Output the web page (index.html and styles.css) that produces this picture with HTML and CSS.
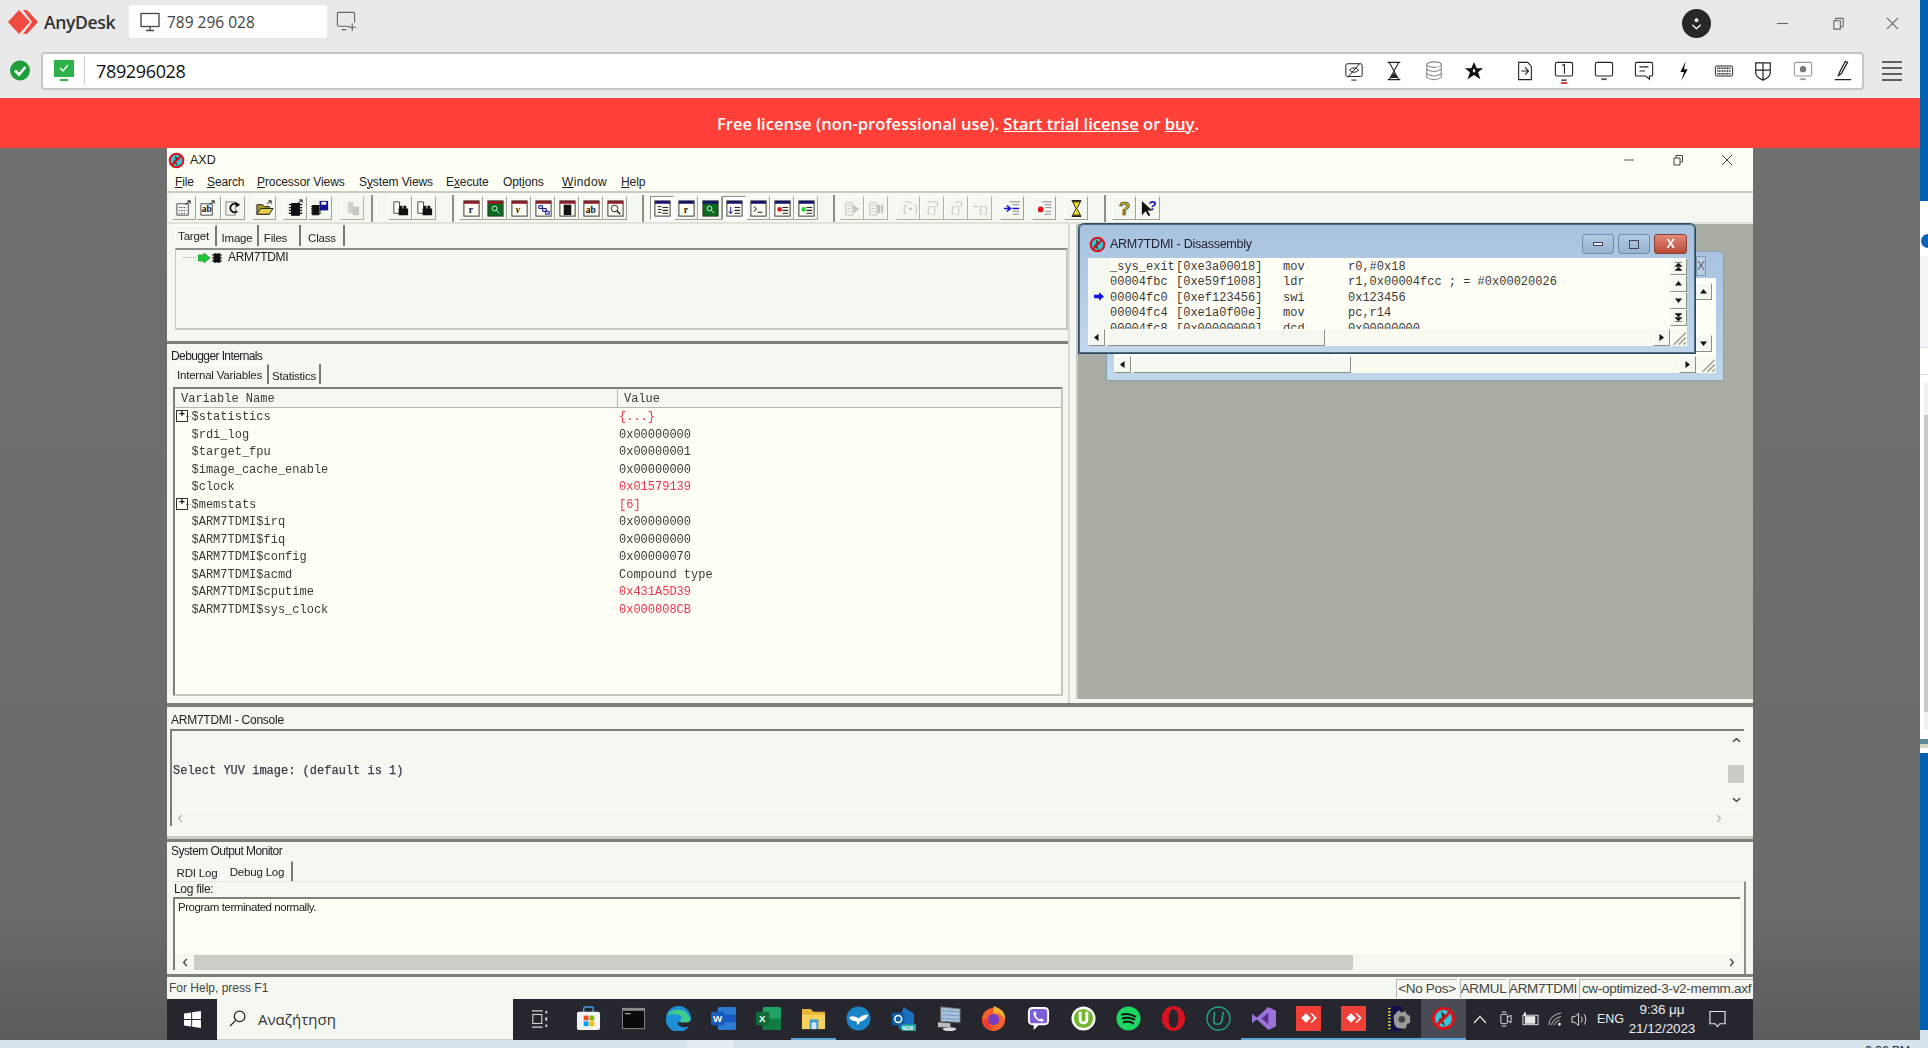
FILE: index.html
```html
<!DOCTYPE html>
<html lang="en">

<head>
    <meta charset="UTF-8">
    <title>AnyDesk - AXD</title>
    <link rel="stylesheet" href="styles.css">
</head>

<body>
    <!-- shared icons -->
    <svg class="defs" width="0" height="0">
        <defs>
            <symbol id="ad-logo" viewBox="0 0 30 30">
                <path d="M11 3 L22 15 L11 27 L0 15 Z" fill="#ef4a40" />
                <path d="M18 3 L22 3 L33 15 L22 27 L18 27 L27 15 Z" fill="#ef4a40" transform="translate(-3 0)" />
            </symbol>
            <symbol id="ad-white" viewBox="0 0 30 30">
                <path d="M10 7 L18 15 L10 23 L2 15 Z" fill="#fff" />
                <path d="M17 7 L20 7 L28 15 L20 23 L17 23 L24 15 Z" fill="#fff" />
            </symbol>
            <symbol id="up" viewBox="0 0 9 9"><path d="M4.5 2 L8 6.5 H1 Z" fill="#111" /></symbol>
            <symbol id="down" viewBox="0 0 9 9"><path d="M1 2.5 H8 L4.5 7 Z" fill="#111" /></symbol>
            <symbol id="up2" viewBox="0 0 9 9"><path d="M1 0.5 H8 M4.5 1 L8 4.5 H1 Z M4.5 5 L8 8.5 H1 Z" fill="#111" stroke="#111" stroke-width=".5" /></symbol>
            <symbol id="down2" viewBox="0 0 9 9"><path d="M1 8.5 H8 M1 0.5 H8 L4.5 4 Z M1 4.5 H8 L4.5 8 Z" fill="#111" stroke="#111" stroke-width=".5" /></symbol>
            <symbol id="left" viewBox="0 0 9 9"><path d="M2 4.5 L6.5 1 V8 Z" fill="#111" /></symbol>
            <symbol id="right" viewBox="0 0 9 9"><path d="M2.5 1 L7 4.5 L2.5 8 Z" fill="#111" /></symbol>
            <symbol id="grip" viewBox="0 0 14 14"><path d="M13 3 L3 13 M13 7 L7 13 M13 11 L11 13" stroke="#9a9c96" stroke-width="1.2" /></symbol>
            <symbol id="chip" viewBox="0 0 20 20">
                <path d="M6 5 H14 V17 H6 Z M3 6 H17 M3 9 H17 M3 12 H17 M3 15 H17" stroke="#111" stroke-width="1.4" fill="#111" />
            </symbol>
            <symbol id="frame-red" viewBox="0 0 20 20">
                <rect x="2" y="2" width="16" height="16" fill="#fffff5" stroke="#333" />
                <rect x="2" y="2" width="16" height="3" fill="#8c1c2a" />
            </symbol>
            <symbol id="frame-blue" viewBox="0 0 20 20">
                <rect x="2" y="2" width="16" height="16" fill="#fffff5" stroke="#333" />
                <rect x="2" y="2" width="16" height="3" fill="#14146e" />
            </symbol>
            <symbol id="lines" viewBox="0 0 20 20">
                <path d="M10 9 H16 M10 12 H16 M10 15 H16" stroke="#222" stroke-width="1.2" />
            </symbol>
            <symbol id="lines-off" viewBox="0 0 20 20">
                <path d="M3 4 H10 V17 H3 Z M5 7 H8 M5 10 H8 M5 13 H8" stroke="#b4b8ae" fill="none" />
            </symbol>
            <symbol id="axd" viewBox="0 0 20 20">
                <circle cx="10" cy="10" r="8" fill="#36c4d8" />
                <path d="M8 4 L13 9 L9 11 L12 17 L6 11 L9 9 Z" fill="#3a2a10" />
                <circle cx="10" cy="10" r="8" fill="none" stroke="#d8141c" stroke-width="2.4" />
                <path d="M4.5 15.5 L15.5 4.5" stroke="#d8141c" stroke-width="2.4" />
            </symbol>
            <symbol id="binoc" viewBox="0 0 20 20">
                <path d="M3 3 H9 V15 H3 Z" fill="#fffff5" stroke="#444" />
                <path d="M9 7 H12 V10 H9 Z M13 7 H16 V10 H13 Z M8 10 H13 V17 H8 Z M12 10 H18 V17 H12 Z" fill="#111" />
            </symbol>
        </defs>
    </svg>

    <div class="screen">
        <div class="desk">
            <div class="remote-frame">
                <header class="tabbar">
                    <svg class="ad-mark"><use href="#ad-logo" /></svg>
                    <span class="ad-name">AnyDesk</span>
                    <div class="session-tab">
                        <svg class="session-icon" viewBox="0 0 20 20" fill="none" stroke="#444" stroke-width="1.3">
                            <rect x="1" y="1.5" width="18" height="13" />
                            <path d="M10 15 V18 M6 18.5 H14" />
                        </svg>
                        <span>789 296 028</span>
                    </div>
                    <svg class="newtab" viewBox="0 0 22 22" fill="none" stroke="#666" stroke-width="1.2">
                        <path d="M14 16 H3 Q1.5 16 1.5 14.5 V3 Q1.5 1.5 3 1.5 H18 Q19.5 1.5 19.5 3 V12" />
                        <path d="M6 19.5 H11 M17 13 V21 M13 17 H21" />
                    </svg>
                    <div class="tabbar-right">
                        <div class="dl-badge">
                            <svg viewBox="0 0 16 16" fill="#fff">
                                <circle cx="8" cy="4.5" r="2" />
                                <path d="M3.5 8.5 L8 12.5 L12.5 8.5 L12.5 10.5 L8 14.5 L3.5 10.5 Z" />
                            </svg>
                        </div>
                        <svg class="wc wc-min" viewBox="0 0 14 14" stroke="#666" stroke-width="1.2"><path d="M1 7 H13" /></svg>
                        <svg class="wc wc-max" viewBox="0 0 14 14" fill="none" stroke="#666" stroke-width="1.2"><path d="M2 4 H9 V13 H2 Z M4 4 V1.5 H12 V10.5 H9" /></svg>
                        <svg class="wc wc-close" viewBox="0 0 14 14" stroke="#666" stroke-width="1.2"><path d="M1 1 L13 13 M13 1 L1 13" /></svg>
                    </div>
                </header>

                <div class="addressrow">
                    <svg class="ok-badge" viewBox="0 0 20 20">
                        <circle cx="10" cy="10" r="10" fill="#1f9e3a" />
                        <path d="M5 10 L9 14 L15.5 6.5" fill="none" stroke="#fff" stroke-width="2.6" />
                    </svg>
                    <div class="addressbar">
                        <svg class="addr-mon" viewBox="0 0 20 22">
                            <rect x="0" y="0" width="20" height="17" fill="#2db24a" />
                            <path d="M6 8 L9 11 L14 5" fill="none" stroke="#fff" stroke-width="1.4" />
                            <rect x="6" y="19" width="8" height="2" fill="#2db24a" />
                        </svg>
                        <span class="addr-text">789296028</span>
                        <div class="addr-tools">
                            <svg viewBox="0 0 22 22" fill="none" stroke="#222" stroke-width="1.1"><rect x="2" y="3" width="18" height="14" rx="2" /><path d="M8 21 H14 M4 18 L18 2 M6 10 Q11 5 16 10 Q11 15 6 10 Z" /></svg>
                            <svg viewBox="0 0 22 22" fill="none" stroke="#222" stroke-width="1.2"><path d="M4 1.5 H18 M4 20.5 H18 M6 2 L16 20 M16 2 L6 20" /><path d="M8 18 H14 L11 14 Z" fill="#222" /></svg>
                            <svg viewBox="0 0 22 22" fill="none" stroke="#888" stroke-width="1.2"><ellipse cx="11" cy="4" rx="8" ry="3" /><path d="M3 4 V18 Q11 23 19 18 V4 M3 9 Q11 14 19 9 M3 14 Q11 19 19 14" /></svg>
                            <svg viewBox="0 0 22 22"><path d="M11 1 L14 8 H21 L15.5 12.5 L18 20 L11 15.5 L4 20 L6.5 12.5 L1 8 H8 Z" fill="#111" /><path d="M11 8 L12.5 11 L11 13 L9.5 11 Z" fill="#fff" /></svg>
                            <span class="tool-gap"></span>
                            <svg viewBox="0 0 22 22" fill="none" stroke="#222" stroke-width="1.2"><path d="M4 1.5 H14 L18 6 V20.5 H4 Z M7 11 H14 M11 7 L15 11 L11 15" /></svg>
                            <svg class="tool-active" viewBox="0 0 22 22" fill="none" stroke="#222" stroke-width="1.2"><rect x="1.5" y="1.5" width="19" height="15" rx="2" /><path d="M9 5 L11.5 3.8 V14 M8 21 H14" /></svg>
                            <svg viewBox="0 0 22 22" fill="none" stroke="#222" stroke-width="1.2"><rect x="1.5" y="1.5" width="19" height="15" rx="2" /><path d="M8 20 H14" stroke-width="2" stroke="#555" /></svg>
                            <svg viewBox="0 0 22 22" fill="none" stroke="#222" stroke-width="1.2"><path d="M3 1.5 H19 Q20.5 1.5 20.5 3 V15 Q20.5 16.5 19 16.5 H17 V20 L13 16.5 H3 Q1.5 16.5 1.5 15 V3 Q1.5 1.5 3 1.5 Z M6 6.5 H16 M6 11 H12" /></svg>
                            <svg viewBox="0 0 22 22"><path d="M13 0 L7 12 H11 L8 22 L15 9 H11 Z" fill="#111" /></svg>
                            <svg viewBox="0 0 22 22"><rect x="1.5" y="5.5" width="19" height="11" rx="1.5" fill="#fff" stroke="#111" /><path d="M3.5 8 H18.5 M3.5 11 H18.5 M3.5 14 H18.5" stroke="#222" stroke-width="1.6" stroke-dasharray="1.2 .6" /></svg>
                            <svg viewBox="0 0 22 22" fill="none" stroke="#222" stroke-width="1.3"><path d="M3 2 H19 V13 Q19 18 11 21 Q3 18 3 13 Z M11 2 V21 M3 10 H19" /></svg>
                            <svg viewBox="0 0 22 22" fill="none" stroke="#999" stroke-width="1.2"><rect x="1.5" y="1.5" width="19" height="15" rx="2" /><circle cx="11" cy="9" r="3.5" fill="#777" stroke="none" /><path d="M8 20 H14" stroke-width="2" /></svg>
                            <svg viewBox="0 0 22 22" fill="none" stroke="#222" stroke-width="1.2"><path d="M6 16 L9 14 L16 1.5 L13.5 0.5 L7 13 Z M2 20.5 H20" stroke-width="1.4" /></svg>
                        </div>
                    </div>
                    <svg class="hamburger" viewBox="0 0 20 22" stroke="#333" stroke-width="1.5"><path d="M0 2 H20 M0 8 H20 M0 14 H20 M0 20 H20" /></svg>
                </div>

                <div class="banner">
                    Free license (non-professional use).&nbsp;<a>Start trial license</a>&nbsp;or&nbsp;<a>buy</a>.
                </div>
            </div>

            <main class="remote">
                <div class="axd">
                    <div class="axd-soft">
                        <div class="axd-title">
                            <svg class="axd-icon"><use href="#axd" /></svg>
                            <span>AXD</span>
                            <div class="axd-controls">
                                <svg viewBox="0 0 12 12" stroke="#555"><path d="M1 6 H11" /></svg>
                                <svg viewBox="0 0 12 12" fill="none" stroke="#444"><path d="M2 4 H8 V11 H2 Z M4 4 V1.5 H10.5 V8 H8" /></svg>
                                <svg viewBox="0 0 12 12" stroke="#444"><path d="M1 1 L11 11 M11 1 L1 11" /></svg>
                            </div>
                        </div>

                        <nav class="menubar">
                            <span><u>F</u>ile</span>
                            <span><u>S</u>earch</span>
                            <span><u>P</u>rocessor Views</span>
                            <span>S<u>y</u>stem Views</span>
                            <span>E<u>x</u>ecute</span>
                            <span>Opt<u>i</u>ons</span>
                            <span class="menu-window"><u>W</u>indow</span>
                            <span><u>H</u>elp</span>
                        </nav>

                        <div class="toolbar">
                            <div class="tool-group tg-first">
                                <button class="tool"><svg viewBox="0 0 20 20"><path d="M2 5 H14 V17 H2 Z" fill="#fff" stroke="#444" /><path d="M4 9 H12 M4 12 H12 M4 15 H12" stroke="#333" stroke-dasharray="1.5 1" /><path d="M11 6 L16 2 M16 2 H13 M16 2 V5" stroke="#111" fill="none" /></svg></button>
                                <button class="tool"><svg viewBox="0 0 20 20"><path d="M2 5 H14 V17 H2 Z" fill="#fff" stroke="#444" /><text x="3" y="14" class="tool-letter">ab</text><path d="M11 6 L16 2 M16 2 H13 M16 2 V5" stroke="#111" fill="none" /></svg></button>
                                <button class="tool"><svg viewBox="0 0 20 20"><path d="M2 3 H12 V17 H2 Z" fill="#f4f4ec" stroke="#888" /><path d="M14 6 A4.5 4.5 0 1 0 14 13" fill="none" stroke="#111" stroke-width="2" /><path d="M12 3 L17 6 L13 9 Z" fill="#111" /></svg></button>
                            </div>
                            <div class="tool-group tg-open">
                                <button class="tool"><svg viewBox="0 0 20 20"><path d="M2 6 H8 L10 8 H15 V16 H2 Z" fill="#a89a28" stroke="#222" /><path d="M2 16 L6 10 H19 L15 16 Z" fill="#e4d04a" stroke="#222" /><path d="M13 5 L17 2 M17 2 H14 M17 2 V5" stroke="#111" fill="none" /></svg></button>
                            </div>
                            <div class="tool-group tg-chips">
                                <button class="tool"><svg viewBox="0 0 20 20"><use href="#chip" /><path d="M13 4 L17 1 M17 1 H14 M17 1 V4" stroke="#111" fill="none" /></svg></button>
                                <button class="tool"><svg viewBox="0 0 20 20"><use href="#chip" x="-3" y="3" width="16" height="16" /><rect x="9" y="2" width="9" height="10" fill="#14148c" /><rect x="11" y="3" width="5" height="3" fill="#fff" /></svg></button>
                            </div>
                            <div class="tool-group tg-off">
                                <button class="tool tool-off"><svg viewBox="0 0 20 20"><path d="M5 3 H11 V15 H5 Z" fill="#c8ccc2" /><path d="M10 8 H17 V17 H10 Z" fill="#b8bcb2" /></svg></button>
                            </div>
                            <span class="tool-sep tool-sep-a"></span>
                            <div class="tool-group tg-find">
                                <button class="tool"><svg viewBox="0 0 20 20"><use href="#binoc" /></svg></button>
                                <button class="tool"><svg viewBox="0 0 20 20"><use href="#binoc" /></svg></button>
                            </div>
                            <span class="tool-sep tool-sep-b"></span>
                            <div class="tool-group tg-views">
                                <button class="tool"><svg viewBox="0 0 20 20"><use href="#frame-red" /><text x="7" y="15" class="tool-letter">r</text></svg></button>
                                <button class="tool"><svg viewBox="0 0 20 20"><rect x="2" y="2" width="16" height="16" fill="#0c6a1c" stroke="#333" /><rect x="2" y="2" width="16" height="3" fill="#8c1c2a" /><circle cx="9" cy="10" r="2.5" fill="none" stroke="#cfe" /><path d="M11 12 L14 15" stroke="#cfe" /></svg></button>
                                <button class="tool"><svg viewBox="0 0 20 20"><use href="#frame-red" /><text x="6" y="15" class="tool-letter tool-italic">v</text></svg></button>
                                <button class="tool"><svg viewBox="0 0 20 20"><use href="#frame-red" /><path d="M5 7 H9 V10 H5 Z M9 10 H13 V13 H9 Z M12 13 H16 V16 H12 Z" fill="#d8d8f0" stroke="#14148c" /></svg></button>
                                <button class="tool"><svg viewBox="0 0 20 20"><use href="#frame-red" /><rect x="6" y="6" width="8" height="11" fill="#111" /></svg></button>
                                <button class="tool"><svg viewBox="0 0 20 20"><use href="#frame-red" /><text x="4" y="15" class="tool-letter">ab</text></svg></button>
                                <button class="tool"><svg viewBox="0 0 20 20"><use href="#frame-red" /><circle cx="9" cy="10" r="3.5" fill="none" stroke="#222" /><path d="M11.5 12.5 L15 16" stroke="#222" stroke-width="1.5" /></svg></button>
                            </div>
                            <span class="tool-sep tool-sep-c"></span>
                            <div class="tool-group tg-cpu">
                                <button class="tool tool-on"><svg viewBox="0 0 20 20"><use href="#frame-blue" /><path d="M5 8 H9 M5 11 H9 M5 14 H9" stroke="#222" /><use href="#lines" /></svg></button>
                                <button class="tool"><svg viewBox="0 0 20 20"><use href="#frame-blue" /><text x="7" y="15" class="tool-letter">r</text></svg></button>
                                <button class="tool"><svg viewBox="0 0 20 20"><rect x="2" y="2" width="16" height="16" fill="#0c6a1c" stroke="#333" /><rect x="2" y="2" width="16" height="3" fill="#14146e" /><circle cx="9" cy="10" r="2.5" fill="none" stroke="#cfe" /><path d="M11 12 L14 15" stroke="#cfe" /></svg></button>
                                <button class="tool tool-on"><svg viewBox="0 0 20 20"><use href="#frame-blue" /><path d="M6 8 V15 M4 13 L6 15.5 L8 13" stroke="#14148c" fill="none" /><use href="#lines" /></svg></button>
                                <button class="tool"><svg viewBox="0 0 20 20"><use href="#frame-blue" /><path d="M5 8 L8 10.5 L5 13 M9 14 H14" stroke="#111" fill="none" /></svg></button>
                                <button class="tool"><svg viewBox="0 0 20 20"><use href="#frame-blue" /><circle cx="7" cy="11" r="2.5" fill="#e01420" /><use href="#lines" /></svg></button>
                                <button class="tool"><svg viewBox="0 0 20 20"><use href="#frame-blue" /><circle cx="7" cy="11" r="2.5" fill="#1cd838" /><use href="#lines" /></svg></button>
                            </div>
                            <span class="tool-sep tool-sep-d"></span>
                            <div class="tool-group tg-run">
                                <button class="tool tool-off"><svg viewBox="0 0 20 20"><use href="#lines-off" /><path d="M11 6 L17 10.5 L11 15 Z" fill="#b4b8ae" /></svg></button>
                                <button class="tool tool-off"><svg viewBox="0 0 20 20"><use href="#lines-off" /><path d="M11 6 H14 V15 H11 Z M15 6 H17 V15 H15 Z" fill="#b4b8ae" /></svg></button>
                            </div>
                            <div class="tool-group tg-step">
                                <button class="tool tool-off"><svg viewBox="0 0 20 20"><text x="3" y="14" class="tool-brace">{•}</text><path d="M6 3 H12 L14 5" fill="none" stroke="#b4b8ae" /></svg></button>
                                <button class="tool tool-off"><svg viewBox="0 0 20 20"><text x="3" y="15" class="tool-brace">{}</text><path d="M5 3 H15 V8" fill="none" stroke="#b4b8ae" /></svg></button>
                                <button class="tool tool-off"><svg viewBox="0 0 20 20"><text x="3" y="15" class="tool-brace">{}</text><path d="M9 3 H15 V8" fill="none" stroke="#b4b8ae" /></svg></button>
                                <button class="tool tool-off"><svg viewBox="0 0 20 20"><text x="7" y="15" class="tool-brace">{}</text><path d="M2 8 H8" stroke="#b4b8ae" /></svg></button>
                            </div>
                            <div class="tool-group tg-bp1">
                                <button class="tool"><svg viewBox="0 0 20 20"><path d="M7 3 H18 M10 6 H17 M10 13 H17 M10 16 H17" stroke="#888" /><path d="M1 10 H7 M4 7 L8 10 L4 13 M10 10 H17" stroke="#1414d8" stroke-width="1.6" fill="none" /></svg></button>
                            </div>
                            <div class="tool-group tg-bp2">
                                <button class="tool"><svg viewBox="0 0 20 20"><path d="M7 3 H18 M10 6 H17 M11 9 H17 M11 13 H17 M10 16 H17" stroke="#888" /><circle cx="6" cy="11" r="3" fill="#e01420" /></svg></button>
                            </div>
                            <div class="tool-group tg-wait">
                                <button class="tool"><svg viewBox="0 0 20 20"><path d="M5 2 H15 M5 18 H15" stroke="#222" stroke-width="2" /><path d="M6 3 H14 L10.5 10 L14 17 H6 L9.5 10 Z" fill="#f2e22a" stroke="#222" /></svg></button>
                            </div>
                            <span class="tool-sep tool-sep-e"></span>
                            <div class="tool-group tg-help">
                                <button class="tool"><svg viewBox="0 0 20 20"><text x="4" y="17" class="tool-help">?</text></svg></button>
                                <button class="tool"><svg viewBox="0 0 20 20"><path d="M3 2 L3 17 L7 13 L10 18 L12 17 L9 12 L14 12 Z" fill="#111" /><text x="10" y="12" class="tool-help-sm">?</text></svg></button>
                            </div>
                        </div>

                        <div class="workspace">
                            <div class="left-col">
                                <section class="target-pane">
                                    <div class="tabs tabs-target">
                                        <span class="tab tab-active tab-target">Target</span>
                                        <span class="tab tab-image">Image</span>
                                        <span class="tab tab-files">Files</span>
                                        <span class="tab tab-class">Class</span>
                                    </div>
                                    <div class="tree-box">
                                        <span class="tree-dots"></span>
                                        <svg class="tree-arrow" viewBox="0 0 12 10"><path d="M0 2 H6 V0 L12 5 L6 10 V8 H0 Z" fill="#22c83a" stroke="#128022" stroke-width=".6" /></svg>
                                        <svg class="tree-chip" viewBox="0 0 12 12"><path d="M3 2 H9 V10 H3 Z M1 3 H11 M1 6 H11 M1 9 H11 M4 1 V11 M8 1 V11" stroke="#111" fill="#111" /></svg>
                                        <span class="tree-label">ARM7TDMI</span>
                                    </div>
                                </section>

                                <section class="internals">
                                    <div class="pane-title pane-title-dbg">Debugger Internals</div>
                                    <div class="tabs tabs-dbg">
                                        <span class="tab tab-active tab-vars">Internal Variables</span>
                                        <span class="tab tab-stats">Statistics</span>
                                    </div>
                                    <div class="var-box">
                                        <div class="var-head">
                                            <span class="var-head-name">Variable Name</span>
                                            <span class="var-head-value">Value</span>
                                        </div>
                                        <div class="var-rows">
                                            <div class="var-row"><span class="var-name var-expand">$statistics</span><span class="var-changed">{...}</span></div>
                                            <div class="var-row"><span class="var-name">$rdi_log</span><span>0x00000000</span></div>
                                            <div class="var-row"><span class="var-name">$target_fpu</span><span>0x00000001</span></div>
                                            <div class="var-row"><span class="var-name">$image_cache_enable</span><span>0x00000000</span></div>
                                            <div class="var-row"><span class="var-name">$clock</span><span class="var-changed">0x01579139</span></div>
                                            <div class="var-row"><span class="var-name var-expand">$memstats</span><span class="var-changed">[6]</span></div>
                                            <div class="var-row"><span class="var-name">$ARM7TDMI$irq</span><span>0x00000000</span></div>
                                            <div class="var-row"><span class="var-name">$ARM7TDMI$fiq</span><span>0x00000000</span></div>
                                            <div class="var-row"><span class="var-name">$ARM7TDMI$config</span><span>0x00000070</span></div>
                                            <div class="var-row"><span class="var-name">$ARM7TDMI$acmd</span><span>Compound type</span></div>
                                            <div class="var-row"><span class="var-name">$ARM7TDMI$cputime</span><span class="var-changed">0x431A5D39</span></div>
                                            <div class="var-row"><span class="var-name">$ARM7TDMI$sys_clock</span><span class="var-changed">0x000008CB</span></div>
                                        </div>
                                    </div>
                                </section>
                            </div>

                            <div class="mdi">
                                <div class="win win-back">
                                    <div class="win-back-close">X</div>
                                    <div class="back-client">
                                        <div class="back-vscroll">
                                            <span class="sb-btn"><svg><use href="#up" /></svg></span>
                                            <span class="back-thumb"></span>
                                            <span class="sb-btn"><svg><use href="#down" /></svg></span>
                                        </div>
                                        <div class="hscroll">
                                            <span class="sb-btn"><svg><use href="#left" /></svg></span>
                                            <span class="sb-thumb back-hthumb"></span>
                                            <span class="sb-btn sb-push back-right"><svg><use href="#right" /></svg></span>
                                            <svg class="grip"><use href="#grip" /></svg>
                                        </div>
                                    </div>
                                </div>

                                <div class="win win-front">
                                    <div class="win-title">
                                        <svg class="win-icon"><use href="#axd" /></svg>
                                        <span>ARM7TDMI - Disassembly</span>
                                        <div class="win-controls">
                                            <span class="wbtn"><i class="wbtn-min"></i></span>
                                            <span class="wbtn"><i class="wbtn-max"></i></span>
                                            <span class="wbtn wbtn-close">X</span>
                                        </div>
                                    </div>
                                    <div class="dis-client">
                                        <div class="dis-body">
                                            <div class="dis-gutter">
                                                <svg class="pc-arrow" viewBox="0 0 12 10"><path d="M0 3 H6 V0 L12 5 L6 10 V7 H0 Z" fill="#1414e0" /></svg>
                                            </div>
                                            <div class="dis-lines">
                                                <div class="dis-line"><span>_sys_exit</span><span>[0xe3a00018]</span><span>mov</span><span>r0,#0x18</span></div>
                                                <div class="dis-line"><span>00004fbc</span><span>[0xe59f1008]</span><span>ldr</span><span>r1,0x00004fcc ; = #0x00020026</span></div>
                                                <div class="dis-line"><span>00004fc0</span><span>[0xef123456]</span><span>swi</span><span>0x123456</span></div>
                                                <div class="dis-line"><span>00004fc4</span><span>[0xe1a0f00e]</span><span>mov</span><span>pc,r14</span></div>
                                                <div class="dis-line"><span>00004fc8</span><span>[0x00000000]</span><span>dcd</span><span>0x00000000</span></div>
                                            </div>
                                            <div class="dis-vscroll">
                                                <span class="sb-btn"><svg><use href="#up2" /></svg></span>
                                                <span class="sb-btn"><svg><use href="#up" /></svg></span>
                                                <span class="sb-btn"><svg><use href="#down" /></svg></span>
                                                <span class="sb-btn"><svg><use href="#down2" /></svg></span>
                                            </div>
                                        </div>
                                        <div class="hscroll">
                                            <span class="sb-btn"><svg><use href="#left" /></svg></span>
                                            <span class="sb-thumb dis-hthumb"></span>
                                            <span class="sb-btn sb-push"><svg><use href="#right" /></svg></span>
                                            <svg class="grip"><use href="#grip" /></svg>
                                        </div>
                                    </div>
                                </div>
                            </div>
                        </div>

                        <section class="console">
                            <div class="pane-title pane-title-console">ARM7TDMI - Console</div>
                            <div class="console-box">
                                <div class="console-main">
                                    <pre class="console-text">Select YUV image: (default is 1)</pre>
                                    <div class="console-vbar">
                                        <svg class="chev" viewBox="0 0 10 6"><path d="M1 5 L5 1.5 L9 5" /></svg>
                                        <span class="console-thumb"></span>
                                        <svg class="chev" viewBox="0 0 10 6"><path d="M1 1 L5 4.5 L9 1" /></svg>
                                    </div>
                                </div>
                                <div class="console-hbar">
                                    <svg class="chev-side" viewBox="0 0 6 10"><path d="M5 1 L1.5 5 L5 9" /></svg>
                                    <svg class="chev-side" viewBox="0 0 6 10"><path d="M1 1 L4.5 5 L1 9" /></svg>
                                </div>
                            </div>
                        </section>

                        <section class="monitor">
                            <div class="pane-title pane-title-mon">System Output Monitor</div>
                            <div class="tabs tabs-mon">
                                <span class="tab tab-rdi">RDI Log</span>
                                <span class="tab tab-active tab-debug">Debug Log</span>
                            </div>
                            <div class="mon-body">
                                <div class="log-label">Log file:</div>
                                <div class="log-box">
                                    <div class="log-text">Program terminated normally.</div>
                                    <div class="log-hbar">
                                        <svg class="chev-side chev-dark" viewBox="0 0 6 10"><path d="M5 1 L1.5 5 L5 9" /></svg>
                                        <span class="log-thumb"></span>
                                        <svg class="chev-side chev-dark" viewBox="0 0 6 10"><path d="M1 1 L4.5 5 L1 9" /></svg>
                                    </div>
                                </div>
                            </div>
                        </section>

                        <footer class="statusbar">
                            <span class="status-help">For Help, press F1</span>
                            <span class="status-field status-pos">&lt;No Pos&gt;</span>
                            <span class="status-field status-armul">ARMUL</span>
                            <span class="status-field status-cpu">ARM7TDMI</span>
                            <span class="status-field status-file">cw-optimized-3-v2-memm.axf</span>
                        </footer>
                    </div>

                    <div class="taskbar">
                        <div class="start">
                            <svg viewBox="0 0 18 18" fill="#fff"><path d="M0 2.6 L7.6 1.5 V8.4 H0 Z M8.6 1.4 L18 0 V8.4 H8.6 Z M0 9.6 H7.6 V16.5 L0 15.4 Z M8.6 9.6 H18 V18 L8.6 16.6 Z" /></svg>
                        </div>
                        <div class="searchbox">
                            <svg viewBox="0 0 16 16" fill="none" stroke="#222" stroke-width="1.2"><circle cx="10" cy="6" r="5" /><path d="M6.2 9.8 L1 15" /></svg>
                            <span>Αναζήτηση</span>
                        </div>
                        <div class="taskview">
                            <svg viewBox="0 0 20 20" fill="none" stroke="#d8d8d8" stroke-width="1.2"><path d="M1 1 H13 M1 19 H13" /><rect x="2" y="5" width="10" height="10" /><path d="M17 1 V4 M17 8 V12 M17 16 V19" stroke-width="2" /></svg>
                        </div>
                        <div class="task-apps">
                            <span class="app"><svg viewBox="0 0 26 26"><path d="M8 7 V3 Q8 1 10 1 H16 Q18 1 18 3 V7" fill="none" stroke="#3aa0e0" stroke-width="1.6" /><rect x="1" y="6" width="24" height="19" rx="2" fill="#f4f4f4" /><rect x="8" y="10" width="5" height="5" fill="#f25022" /><rect x="14" y="10" width="5" height="5" fill="#7fba00" /><rect x="8" y="16" width="5" height="5" fill="#00a4ef" /><rect x="14" y="16" width="5" height="5" fill="#ffb900" /></svg></span>
                            <span class="app"><svg viewBox="0 0 26 26"><rect x="1" y="2" width="24" height="22" fill="#8a8a8a" /><rect x="2" y="5" width="22" height="18" fill="#0a0a0a" /><path d="M4 8 H10" stroke="#ccc" /></svg></span>
                            <span class="app"><svg viewBox="0 0 26 26"><path d="M13 0 A13 13 0 0 1 26 13 Q26 17 21 17 H12 Q12 22 19 22 Q22 22 24 21 A13 13 0 0 1 0 13 A13 13 0 0 1 13 0 Z" fill="#1d8fd8" /><path d="M1 10 Q4 4 12 4 Q22 4 25 13 Q26 17 21 17 H14 Q19 10 12 9 Q5 8 1 10 Z" fill="#3ecb8c" /></svg></span>
                            <span class="app"><svg viewBox="0 0 26 26"><rect x="7" y="1" width="19" height="24" rx="2" fill="#2b7cd3" /><rect x="7" y="9" width="19" height="8" fill="#185abd" /><rect x="0" y="6" width="14" height="14" rx="1" fill="#185abd" /><text x="2" y="17" class="app-letter">W</text></svg></span>
                            <span class="app"><svg viewBox="0 0 26 26"><rect x="7" y="1" width="19" height="24" rx="2" fill="#21a366" /><rect x="7" y="13" width="19" height="12" fill="#107c41" /><rect x="0" y="6" width="14" height="14" rx="1" fill="#0f6c3a" /><text x="3" y="17" class="app-letter">X</text></svg></span>
                            <span class="app app-open"><svg viewBox="0 0 26 26"><path d="M1 3 H10 L13 6 H25 V24 H1 Z" fill="#e8b53a" /><rect x="1" y="9" width="24" height="15" fill="#f7d15e" /><rect x="9" y="14" width="9" height="10" fill="#3a9ad8" /><rect x="11" y="17" width="5" height="7" fill="#cfe6f5" /></svg></span>
                            <span class="app"><svg viewBox="0 0 26 26"><circle cx="13" cy="13" r="12.5" fill="#1a86c8" /><path d="M3 12 Q8 9 13 13 Q18 8 23 9 Q21 15 15 16 L12 20 L11 16 Q6 16 3 12 Z" fill="#fff" /></svg></span>
                            <span class="app"><svg viewBox="0 0 26 26"><path d="M13 1 L24 8 V24 H8 V16 Z" fill="#1e6fc0" /><rect x="1" y="7" width="13" height="13" rx="1" fill="#0f5ba8" /><circle cx="7.5" cy="13.5" r="3.6" fill="none" stroke="#fff" stroke-width="1.6" /><rect x="11" y="19" width="15" height="7" fill="#1fa8a0" /><text x="11.5" y="25" class="app-tiny">NEW</text></svg></span>
                            <span class="app"><svg viewBox="0 0 26 26"><path d="M5 1 L25 3 V17 L5 16 Z" fill="#a8c4dc" stroke="#777" /><path d="M7 5 L23 6 M7 9 L23 10 M7 13 L23 14" stroke="#4a78b0" stroke-dasharray="1.5 1" /><path d="M2 17 L15 18 V22 H2 Z" fill="#bbb" /><ellipse cx="14" cy="24" rx="7" ry="2" fill="#ddd" /></svg></span>
                            <span class="app"><svg viewBox="0 0 26 26"><circle cx="13" cy="14" r="12" fill="#f9622a" /><path d="M13 0 Q26 4 25 14 Q20 6 13 8 Z" fill="#fbb132" /><circle cx="13" cy="14" r="6" fill="#7a3dc0" /><path d="M1 14 Q3 24 13 25 Q7 20 8 14 Z" fill="#f0392f" /></svg></span>
                            <span class="app"><svg viewBox="0 0 26 26"><path d="M7 1 H19 Q24 1 24 6 V15 Q24 20 19 20 H13 L8 25 V20 Q2 20 2 15 V6 Q2 1 7 1 Z" fill="#fff" /><path d="M7 3 H19 Q22 3 22 6 V15 Q22 18 19 18 H7 Q4 18 4 15 V6 Q4 3 7 3 Z" fill="#7d60d8" /><path d="M8 6 Q10 5 11 8 L10 10 Q12 13 14 14 L16 13 Q19 14 18 16 Q14 17 10 13 Q7 9 8 6 Z" fill="#fff" /></svg></span>
                            <span class="app"><svg viewBox="0 0 26 26"><circle cx="13" cy="13" r="12.5" fill="#fff" /><circle cx="13" cy="13" r="10" fill="#74b72e" /><path d="M8 6 V14 Q8 19 13 19 Q18 19 18 14 V6 H15 V14 Q15 16 13 16 Q11 16 11 14 V6 Z" fill="#fff" /></svg></span>
                            <span class="app"><svg viewBox="0 0 26 26"><circle cx="13" cy="13" r="12.5" fill="#1ed760" /><path d="M6 9 Q13 7 20 11 M7 13 Q13 11 19 14 M8 17 Q13 15 18 18" fill="none" stroke="#111" stroke-width="2" stroke-linecap="round" /></svg></span>
                            <span class="app"><svg viewBox="0 0 26 26"><ellipse cx="13" cy="13" rx="12" ry="13" fill="#d81420" /><ellipse cx="13" cy="13" rx="5" ry="10" fill="#26262f" /></svg></span>
                            <span class="app"><svg viewBox="0 0 26 26"><circle cx="13" cy="13" r="12" fill="none" stroke="#1fa87c" stroke-width="1.4" /><path d="M9 6 L8 15 Q8 19 12 19 Q16 19 16.5 15 L18 6" fill="none" stroke="#1fa87c" stroke-width="1.6" /></svg></span>
                            <span class="app app-open"><svg viewBox="0 0 26 26"><path d="M18 1 L26 5 V21 L18 25 L6 14 L1 18 V8 L6 12 Z" fill="#9a72d8" /><path d="M18 7 L11 13 L18 19 Z" fill="#5c2d91" /></svg></span>
                            <span class="app app-open"><span class="ad-tile"><svg><use href="#ad-white" /></svg></span></span>
                            <span class="app app-open"><span class="ad-tile"><svg><use href="#ad-white" /></svg></span></span>
                            <span class="app app-open"><svg viewBox="0 0 28 30"><rect x="1" y="0" width="17" height="30" fill="#10104a" /><path d="M3 2 V28" stroke="#e8d820" stroke-width="3" stroke-dasharray="2 2" /><path d="M8 12 L14 5 L18 8 L22 6 L24 10 L28 12 V20 L24 22 L23 27 L17 27 L12 26 L9 22 Z" fill="#9a9a9a" /><circle cx="18" cy="16" r="4" fill="#444" /></svg></span>
                            <span class="app app-open app-current"><svg><use href="#axd" /></svg></span>
                        </div>
                        <div class="tray">
                            <svg class="tray-chevron" viewBox="0 0 14 8" fill="none" stroke="#e8e8e8" stroke-width="1.2"><path d="M1 7.5 L7 1 L13 7.5" /></svg>
                            <svg class="tray-meet" viewBox="0 0 14 18" fill="none" stroke="#e8e8e8"><rect x="2" y="4" width="7" height="10" rx="1" /><path d="M9 7 L13 5 V13 L9 11 M3 1.5 H8 M3 16.5 H8" /></svg>
                            <svg class="tray-batt" viewBox="0 0 18 14"><rect x="1" y="3" width="16" height="10" fill="none" stroke="#e8e8e8" /><rect x="3" y="4" width="11" height="8" fill="#e8e8e8" /><path d="M2 0 H4 V4 H2 Z" fill="#fff" /></svg>
                            <svg class="tray-wifi" viewBox="0 0 16 16" fill="none" stroke="#d8d8d8"><path d="M1 15 Q1 4 15 1 M4 15 Q5 8 15 5 M7 15 Q8 11 13 9" /><circle cx="13" cy="14" r="1.3" fill="#e8e8e8" /></svg>
                            <svg class="tray-sound" viewBox="0 0 18 16" fill="none" stroke="#e8e8e8"><path d="M1 5 H4 L8 1.5 V14.5 L4 11 H1 Z M11 5 Q13 8 11 11 M14 2.5 Q17.5 8 14 13.5" /></svg>
                            <span class="tray-lang">ENG</span>
                            <div class="clock"><span>9:36 μμ</span><span>21/12/2023</span></div>
                            <svg class="tray-note" viewBox="0 0 18 18" fill="none" stroke="#e8e8e8" stroke-width="1.2"><path d="M1 1 H17 V14 H11.5 L9 17 L6.5 14 H1 Z" /></svg>
                        </div>
                    </div>
                </div>
            </main>

            <div class="strip">
                <span class="strip-block"></span>
                <span class="strip-time">9:36 PM</span>
            </div>
        </div>

        <aside class="edge">
            <div class="edge-blue edge-top"></div>
            <div class="edge-white"><span class="edge-dot"></span></div>
            <div class="edge-pale"></div>
            <div class="edge-input"></div>
            <div class="edge-gap"></div>
            <div class="edge-list"><span class="edge-track"><i></i></span></div>
            <div class="edge-gap2"></div>
            <div class="edge-thumb"></div>
            <div class="edge-blue edge-bottom"></div>
            <div class="edge-foot"></div>
        </aside>
    </div>
</body>

</html>
```

FILE: styles.css
```css
* {
    box-sizing: border-box;
}

html,
body {
    margin: 0;
    height: 100%;
    overflow: hidden;
}

body {
    font-family: "Liberation Sans", Arial, sans-serif;
    font-size: 12px;
    color: #222;
}

.defs {
    position: absolute;
}

.screen {
    display: flex;
    width: 1928px;
    height: 1048px;
}

.desk {
    display: flex;
    flex-direction: column;
    width: 1920px;
}

/* anydesk chrome */
.remote-frame {
    height: 148px;
    background-color: #e9e9e9;
    flex: none;
}

.tabbar {
    display: flex;
    align-items: center;
    height: 44px;
    padding: 0 0 1px 8px;
}

.ad-mark {
    width: 30px;
    height: 30px;
}

.ad-name {
    width: 85px;
    margin-left: 6px;
    font-family: "Open Sans", sans-serif;
    font-size: 17.6px;
    font-weight: 600;
    letter-spacing: -0.4px;
    color: #333;
}

.session-tab {
    display: flex;
    align-items: center;
    width: 198px;
    height: 33px;
    padding-left: 11px;
    background-color: #fff;
    border-radius: 3px;
    font-family: "Open Sans", sans-serif;
    font-size: 15.5px;
    color: #444;
}

.session-icon {
    width: 20px;
    height: 20px;
    margin-right: 7px;
}

.newtab {
    width: 21px;
    height: 21px;
    margin-left: 9px;
}

.tabbar-right {
    display: flex;
    align-items: center;
    margin-left: auto;
    padding: 3px 21px 0 0;
}

.dl-badge {
    display: flex;
    align-items: center;
    justify-content: center;
    width: 29px;
    height: 29px;
    margin-right: 65px;
    border-radius: 50%;
    background-color: #272727;
}

.dl-badge svg {
    width: 15px;
    height: 15px;
}

.wc {
    width: 13px;
    height: 13px;
}

.wc-min {
    margin-right: 43px;
}

.wc-max {
    margin-right: 41px;
}

.addressrow {
    display: flex;
    align-items: center;
    height: 53px;
    padding: 0 0 0 10px;
}

.ok-badge {
    width: 20px;
    height: 21px;
    margin-right: 11px;
}

.addressbar {
    display: flex;
    align-items: center;
    width: 1823px;
    height: 38px;
    background-color: #fff;
    border: 2px solid #c6c6c6;
    border-radius: 4px;
}

.addr-mon {
    width: 20px;
    height: 22px;
    margin-left: 11px;
}

.addr-text {
    margin-left: 10px;
    padding-left: 11px;
    border-left: 1px solid #ccc;
    font-family: "Open Sans", sans-serif;
    font-size: 18px;
    line-height: 28px;
    letter-spacing: -0.35px;
    color: #111;
}

.addr-tools {
    display: flex;
    align-items: center;
    margin-left: auto;
    padding-right: 9px;
}

.addr-tools svg {
    width: 20px;
    height: 22px;
    margin-left: 19.8px;
}

.addr-tools .tool-gap {
    width: 11px;
}

.tool-active {
    box-shadow: 0 9px 0 -7px #ef3f36;
}

.hamburger {
    width: 20px;
    height: 22px;
    margin-left: 18px;
}

.banner {
    display: flex;
    align-items: center;
    justify-content: center;
    height: 51px;
    padding-right: 4px;
    background-color: #ff4038;
    border-top: 1px solid #f5f5f5;
    font-family: "Open Sans", sans-serif;
    font-size: 16.6px;
    font-weight: 600;
    color: #fff;
}

.banner a {
    text-decoration: underline;
}

/* remote desktop */
.remote {
    flex: 1;
    min-height: 0;
    padding: 0 167px;
    background: linear-gradient(#6f6f6f 0%, #6b6b6b 85%, #5c5c5c 100%);
}

.axd {
    display: flex;
    flex-direction: column;
    height: 100%;
    background-color: #f5f8f1;
}

.axd-soft {
    display: flex;
    flex-direction: column;
    height: 850px;
    flex: none;
    filter: blur(0.35px);
}

.axd-title {
    display: flex;
    align-items: center;
    height: 24px;
    flex: none;
    padding: 0 0 0 1px;
    background-color: #fffff5;
    font-size: 12.5px;
}

.axd-icon {
    width: 17px;
    height: 17px;
    margin-right: 5px;
}

.axd-controls {
    display: flex;
    margin-left: auto;
    padding-right: 20px;
}

.axd-controls svg {
    width: 12px;
    height: 12px;
    margin-left: 37px;
}

.menubar {
    display: flex;
    align-items: center;
    height: 19px;
    flex: none;
    padding-left: 8px;
    background-color: #fffff5;
    white-space: nowrap;
}

.menubar span {
    letter-spacing: -0.1px;
}

.menubar span:nth-child(1) {
    width: 32px;
}

.menubar span:nth-child(2) {
    width: 50px;
}

.menubar span:nth-child(3) {
    width: 102px;
}

.menubar span:nth-child(4) {
    width: 87px;
}

.menubar span:nth-child(5) {
    width: 57px;
}

.menubar span:nth-child(6) {
    width: 59px;
}

.menubar span:nth-child(7) {
    width: 59px;
}

.menubar .menu-window {
    letter-spacing: 0.4px;
}

.toolbar {
    display: flex;
    align-items: center;
    height: 33px;
    flex: none;
    padding: 1px 0 0 5px;
    border-top: 2px solid #c8ccc2;
    border-bottom: 2px solid #e0e3da;
    background-color: #f5f8f1;
}

.tool-group {
    display: flex;
}

.tool {
    display: flex;
    align-items: center;
    justify-content: center;
    width: 24px;
    height: 24px;
    padding: 0;
    background-color: #f5f8f1;
    border: 1px solid;
    border-color: #fff #9ea297 #9ea297 #fff;
}

.tool svg {
    width: 19px;
    height: 19px;
}

.tool-on {
    background-color: #fff;
    border-color: #8d9086 #fff #fff #8d9086;
}

.tool-off {
    opacity: 0.8;
}

.tool-letter {
    font: 700 10px "Liberation Serif", serif;
    fill: #111;
}

.tool-italic {
    font-style: italic;
}

.tool-brace {
    font: 10px "Liberation Mono", monospace;
    fill: #a8aca2;
}

.tool-help {
    font: 700 20px "Liberation Sans", sans-serif;
    fill: #c8b820;
    stroke: #222;
    stroke-width: .6px;
}

.tool-help-sm {
    font: 700 14px "Liberation Sans", sans-serif;
    fill: #1414b0;
}

.tool-sep {
    width: 6px;
    height: 27px;
    border-left: 2px solid #8d9086;
    border-right: 1px solid #fff;
}

.tg-first .tool {
    margin-right: 0.5px;
}

.tg-open {
    margin-left: 6.5px;
}

.tg-chips {
    margin-left: 7px;
}

.tg-chips .tool {
    margin-right: 1px;
}

.tg-off {
    margin-left: 7px;
}

.tool-sep-a {
    margin-left: 7px;
}

.tg-find {
    margin-left: 11px;
}

.tool-sep-b {
    margin-left: 16px;
}

.tg-views {
    margin-left: 1px;
}

.tool-sep-c {
    margin-left: 15px;
}

.tg-cpu {
    margin-left: 2px;
}

.tool-sep-d {
    margin-left: 15px;
}

.tg-run {
    margin-left: 1px;
}

.tg-step {
    margin-left: 8px;
}

.tg-bp1 {
    margin-left: 8px;
}

.tg-bp2 {
    margin-left: 8px;
}

.tg-wait {
    margin-left: 8px;
}

.tool-sep-e {
    margin-left: 16px;
}

.tg-help {
    margin-left: 2px;
}

/* split panes */
.workspace {
    display: flex;
    height: 479px;
    flex: none;
}

.left-col {
    display: flex;
    flex-direction: column;
    width: 903px;
    flex: none;
    border-right: 2px solid #d8dbd2;
}

.target-pane {
    height: 120px;
    flex: none;
    padding: 1px 0 0 8px;
    border-bottom: 3px solid #7d8078;
}

.tabs {
    display: flex;
    height: 21px;
    font-size: 11.5px;
}

.tab {
    display: flex;
    align-items: center;
    justify-content: center;
    height: 100%;
    padding-top: 4px;
    border-right: 2px solid #777a72;
    letter-spacing: -0.2px;
}

.tab-active {
    padding-top: 0;
    border-left: 1px solid #fff;
    border-top: 1px solid #fff;
}

.tab-target {
    width: 42px;
    padding-right: 4px;
}

.tab-image {
    width: 42px;
}

.tab-files {
    width: 42px;
    padding-right: 7px;
}

.tab-class {
    width: 44px;
}

.tab-vars {
    width: 98px;
}

.tab-stats {
    width: 52px;
}

.tab-rdi {
    width: 50px;
    border-right: 0;
}

.tab-debug {
    width: 71px;
}

.tree-box {
    display: flex;
    align-items: flex-start;
    height: 82px;
    width: 893px;
    margin-top: 2px;
    padding: 1px 0 0 7px;
    background-color: #f5f8f1;
    border-top: 2px solid #8b8e86;
    border-left: 1px solid #c5c8bf;
    border-right: 2px solid #c5c8bf;
    border-bottom: 2px solid #c5c8bf;
}

.tree-dots {
    width: 13px;
    height: 1px;
    margin-top: 6px;
    border-top: 1px dotted #aaa;
}

.tree-arrow {
    width: 12px;
    height: 10px;
    margin: 2px 0 0 2px;
}

.tree-chip {
    width: 12px;
    height: 12px;
    margin: 1px 0 0 1px;
}

.tree-label {
    margin-left: 5px;
    letter-spacing: -0.3px;
    line-height: 13px;
}

.internals {
    flex: 1;
    padding: 0 0 5px 4px;
}

.pane-title {
    height: 21px;
    line-height: 21px;
    font-size: 12px;
}

.pane-title-dbg {
    height: 20px;
    line-height: 25px;
    letter-spacing: -0.6px;
}

.tabs-dbg {
    height: 20px;
}

.var-box {
    display: flex;
    flex-direction: column;
    width: 890px;
    height: 309px;
    margin: 3px 0 0 2px;
    background-color: #fffff5;
    border-top: 2px solid #7d8078;
    border-left: 2px solid #7d8078;
    border-right: 2px solid #c5c8bf;
    border-bottom: 2px solid #c5c8bf;
    font-family: "Liberation Mono", monospace;
    font-size: 12px;
    color: #3a3a3a;
}

.var-head {
    display: flex;
    height: 19px;
    flex: none;
    line-height: 20px;
    background-color: #f5f8f1;
    border-bottom: 1px solid #b4b7ae;
}

.var-head-name {
    width: 443px;
    padding-left: 6px;
    border-right: 1px solid #b4b7ae;
}

.var-head-value {
    padding-left: 6px;
}

.var-rows {
    padding-top: 1px;
}

.var-row {
    display: flex;
    height: 17.5px;
    line-height: 17.5px;
}

.var-name {
    position: relative;
    width: 444px;
    padding-left: 16.5px;
}

.var-expand::before {
    content: "+";
    position: absolute;
    left: 1px;
    top: 1px;
    width: 10px;
    height: 10px;
    border: 1px solid #333;
    font: 700 10px/8px "Liberation Mono", monospace;
    text-align: center;
    color: #111;
}

.var-expand::after {
    content: "";
    position: absolute;
    left: 11px;
    top: 7px;
    width: 5px;
    border-top: 1px dotted #888;
}

.var-changed {
    color: #ee3350;
}

.mdi {
    position: relative;
    flex: 1;
    margin-left: 6px;
    margin-bottom: 4px;
    border-left: 2px solid #c5c8bf;
    background-color: #a9aca3;
}

/* floating windows inside the mdi area */
.win {
    position: absolute;
    background: linear-gradient(#a8c3df, #c0d7ec);
    border: 1px solid #4d6d86;
    border-radius: 5px 5px 0 0;
}

.win-back {
    left: 28px;
    top: 27px;
    width: 618px;
    height: 130px;
    padding: 26px 7px 7px;
    border-color: #86a0b4;
}

.win-back-close {
    position: absolute;
    right: 17px;
    top: 4px;
    width: 10px;
    height: 20px;
    border: 1px solid #7e9ab0;
    background-color: #b8cde2;
    color: #666;
    font-size: 12px;
    line-height: 18px;
    text-align: right;
}

.back-client {
    display: flex;
    flex-direction: column;
    justify-content: flex-end;
    position: relative;
    height: 100%;
    background-color: #fffff5;
}

.back-vscroll {
    position: absolute;
    right: 4px;
    top: 5px;
    display: flex;
    flex-direction: column;
    height: 69px;
    align-items: center;
}

.back-thumb {
    flex: 1;
}

.back-right {
    margin-right: 3px;
}

.win-front {
    left: 1px;
    top: 0;
    width: 616px;
    height: 129px;
    padding: 33px 7px 8px 8px;
    box-shadow: 0 0 0 1px #2d4a5e;
}

.win-title {
    position: absolute;
    left: 9px;
    right: 7px;
    top: 8px;
    display: flex;
    align-items: center;
    height: 22px;
    font-size: 12.5px;
    letter-spacing: -0.25px;
    color: #223;
}

.win-icon {
    width: 17px;
    height: 17px;
    margin-right: 4px;
}

.win-controls {
    display: flex;
    gap: 4px;
    margin-left: auto;
}

.wbtn {
    display: flex;
    align-items: center;
    justify-content: center;
    width: 32px;
    height: 20px;
    background: linear-gradient(#b4cbe2, #96b2d0);
    border: 1px solid #6f8ca8;
    border-radius: 3px;
    font-weight: 700;
    color: #fff;
}

.wbtn-close {
    width: 33px;
    background: linear-gradient(#e28a78, #b84a3a);
    border-color: #8c3d30;
}

.wbtn-min {
    width: 10px;
    height: 4px;
    border: 1px solid #445;
    background-color: #eef;
}

.wbtn-max {
    width: 10px;
    height: 9px;
    border: 1px solid #445;
}

.dis-client {
    display: flex;
    flex-direction: column;
    height: 100%;
    background-color: #fffff5;
}

.dis-body {
    display: flex;
    height: 71px;
    flex: none;
    overflow: hidden;
}

.dis-gutter {
    width: 22px;
    flex: none;
    padding: 34px 0 0 6px;
    background-color: #f5f8f1;
}

.pc-arrow {
    display: block;
    width: 10px;
    height: 9px;
}

.dis-lines {
    flex: 1;
    padding-top: 2px;
    font-family: "Liberation Mono", monospace;
    font-size: 12px;
    color: #3a3a3a;
}

.dis-line {
    display: grid;
    grid-template-columns: 66px 107px 65px 1fr;
    height: 15.4px;
    line-height: 15.4px;
    white-space: pre;
}

.dis-vscroll {
    display: flex;
    flex-direction: column;
    width: 17px;
    flex: none;
}

.sb-btn {
    display: flex;
    align-items: center;
    justify-content: center;
    width: 17px;
    height: 17px;
    flex: none;
    background-color: #f5f8f1;
    border: 1px solid;
    border-color: #fff #8d9086 #8d9086 #fff;
}

.sb-btn svg {
    width: 9px;
    height: 9px;
}

.hscroll {
    display: flex;
    height: 17px;
    flex: none;
    background-color: #fbfbf0;
}

.sb-thumb {
    display: block;
    background-color: #f5f8f1;
    border: 1px solid;
    border-color: #fff #8d9086 #8d9086 #fff;
}

.dis-hthumb {
    width: 218px;
    margin-left: 2px;
}

.back-hthumb {
    width: 218px;
    margin-left: 2px;
}

.sb-push {
    margin-left: auto;
}

.grip {
    width: 17px;
    height: 17px;
}

/* console */
.console {
    height: 136px;
    flex: none;
    padding-left: 4px;
    border-top: 4px solid #7d8078;
    border-bottom: 3px solid #c8ccc2;
}

.pane-title-console {
    height: 22px;
    line-height: 26px;
    letter-spacing: -0.25px;
}

.console-box {
    display: flex;
    flex-direction: column;
    width: 1574px;
    height: 97px;
    margin-left: -1px;
    border-top: 2px solid #7d8078;
    border-left: 2px solid #7d8078;
}

.console-main {
    display: flex;
    flex: 1;
}

.console-text {
    flex: 1;
    margin: 0;
    padding: 32px 0 0 1px;
    font: 12px/17px "Liberation Mono", monospace;
    color: #3c3a4a;
    -webkit-text-stroke: 0.25px #3c3a4a;
}

.console-vbar {
    display: flex;
    flex-direction: column;
    align-items: center;
    width: 16px;
    padding-top: 6px;
}

.chev {
    width: 9px;
    height: 6px;
    flex: none;
    fill: none;
    stroke: #444;
    stroke-width: 1.6;
}

.console-thumb {
    width: 16px;
    height: 18px;
    margin: 22px 0 14px;
    background-color: #c9ccc5;
}

.console-hbar {
    display: flex;
    align-items: center;
    justify-content: space-between;
    height: 17px;
    padding: 0 22px 0 5px;
    border-top: 1px solid #fbfcf8;
    flex: none;
}

.chev-side {
    width: 6px;
    height: 9px;
    fill: none;
    stroke: #b5b8b0;
    stroke-width: 1.6;
}

.chev-dark {
    stroke: #444;
}

/* output monitor */
.monitor {
    height: 138px;
    flex: none;
    padding-left: 4px;
    border-top: 3px solid #7d8078;
    border-bottom: 3px solid #7d8078;
}

.pane-title-mon {
    height: 19px;
    letter-spacing: -0.55px;
    line-height: 19px;
}

.tabs-mon {
    height: 20px;
    margin-left: 1px;
}

.mon-body {
    width: 1575px;
    height: 93px;
    border-top: 1px solid #e4e7de;
    border-right: 2px solid #8d9086;
}

.log-label {
    height: 15px;
    padding-left: 3px;
    line-height: 15px;
    letter-spacing: -0.3px;
}

.log-box {
    display: flex;
    flex-direction: column;
    width: 1567px;
    height: 73px;
    margin-left: 2px;
    border-top: 2px solid #7d8078;
    border-left: 2px solid #7d8078;
}

.log-text {
    flex: 1;
    padding: 1px 0 0 3px;
    background-color: #fffff5;
    font-size: 11.5px;
    letter-spacing: -0.45px;
    line-height: 14px;
}

.log-hbar {
    display: flex;
    align-items: center;
    height: 16px;
    flex: none;
    padding-left: 7px;
    padding-right: 5px;
}

.log-thumb {
    width: 1159px;
    height: 15px;
    margin: 0 auto 0 6px;
    background-color: #cbcec7;
}

/* status bar */
.statusbar {
    display: flex;
    align-items: center;
    height: 22px;
    flex: none;
    background-color: #f5f8f1;
    font-size: 13.5px;
    color: #444;
}

.status-help {
    padding-left: 2px;
    margin-right: auto;
    font-size: 12px;
}

.status-field {
    display: flex;
    align-items: center;
    justify-content: center;
    height: 19px;
    margin-left: 3px;
    border-top: 1px solid #b4b7ae;
    border-left: 1px solid #b4b7ae;
    letter-spacing: -0.3px;
    white-space: nowrap;
}

.status-pos {
    width: 61px;
}

.status-armul {
    width: 46px;
}

.status-cpu {
    width: 67px;
}

.status-file {
    width: 174px;
}

/* windows taskbar */
.taskbar {
    display: flex;
    align-items: stretch;
    height: 42px;
    flex: none;
    background-color: #26262f;
}

.start {
    display: flex;
    align-items: center;
    justify-content: center;
    width: 50px;
}

.start svg {
    width: 17px;
    height: 17px;
}

.searchbox {
    display: flex;
    align-items: center;
    width: 296px;
    padding-left: 12px;
    background-color: #f5f8f1;
    border-bottom: 1px solid #ccc;
    font-family: "Open Sans", "Noto Sans", sans-serif;
    font-size: 15px;
    color: #333;
}

.searchbox svg {
    width: 17px;
    height: 17px;
    margin-right: 12px;
}

.taskview {
    display: flex;
    align-items: center;
    justify-content: center;
    width: 53px;
}

.taskview svg {
    width: 18px;
    height: 20px;
}

.task-apps {
    display: flex;
}

.app {
    display: flex;
    align-items: center;
    justify-content: center;
    width: 45px;
    border-bottom: 2px solid transparent;
}

.app svg {
    width: 25px;
    height: 25px;
}

.app-open {
    border-bottom-color: #5fa6dc;
}

.app-current {
    background-color: #4a4a55;
}

.app-letter {
    font: 700 10px "Liberation Sans", sans-serif;
    fill: #fff;
}

.app-tiny {
    font: 700 5px "Liberation Sans", sans-serif;
    fill: #fff;
}

.ad-tile {
    display: flex;
    align-items: center;
    justify-content: center;
    width: 25px;
    height: 25px;
    background-color: #ef3f36;
}

.ad-tile svg {
    width: 18px;
    height: 18px;
}

.tray {
    display: flex;
    align-items: center;
    flex: 1;
    color: #ececec;
}

.tray-chevron {
    width: 14px;
    height: 9px;
    margin-left: 7px;
}

.tray-meet {
    width: 13px;
    height: 18px;
    margin-left: 11.5px;
}

.tray-batt {
    width: 17px;
    height: 14px;
    margin-left: 10px;
}

.tray-wifi {
    width: 14px;
    height: 14px;
    margin-left: 9.5px;
}

.tray-sound {
    width: 17px;
    height: 15px;
    margin-left: 8.5px;
}

.tray-lang {
    width: 24px;
    margin-left: 9.5px;
    font-size: 12.5px;
}

.clock {
    display: flex;
    flex-direction: column;
    align-items: center;
    width: 72px;
    margin-left: 5px;
    font-size: 13.5px;
    line-height: 19px;
    letter-spacing: -0.1px;
    white-space: nowrap;
}

.tray-note {
    width: 17px;
    height: 18px;
    margin-left: 10.5px;
}

.strip {
    display: flex;
    height: 8px;
    flex: none;
    overflow: hidden;
    background-color: #d6e2ec;
}

.strip-block {
    width: 47px;
    margin-left: 687px;
    background-color: #e6edf3;
}

.strip-time {
    margin: 4px 10px 0 auto;
    font-size: 12px;
    line-height: 14px;
    color: #222;
}

/* cropped window behind the remote session */
.edge {
    display: flex;
    flex-direction: column;
    width: 8px;
    flex: none;
}

.edge-blue {
    background-color: #0060b0;
}

.edge-top {
    height: 201px;
}

.edge-white {
    height: 55px;
    padding: 33px 0 0 1px;
    background-color: #fff;
}

.edge-dot {
    display: block;
    width: 14px;
    height: 14px;
    border-radius: 50%;
    background-color: #0a63b8;
}

.edge-pale {
    height: 91px;
    background-color: #f3f4f8;
}

.edge-input {
    height: 28px;
    background-color: #fff;
    border-top: 1px solid #ddd;
    border-bottom: 1px solid #ddd;
}

.edge-gap {
    height: 8px;
    background-color: #fff;
}

.edge-list {
    height: 347px;
    padding-left: 4px;
    background-color: #fff;
}

.edge-track {
    display: block;
    height: 100%;
    padding-top: 32px;
    background-color: #f1f1f1;
}

.edge-track i {
    display: block;
    height: 297px;
    background-color: #c8c8c8;
}

.edge-gap2 {
    height: 5px;
    background-color: #fff;
}

.edge-thumb {
    height: 18px;
    background: linear-gradient(#fff 0 20%, #5a8a9a 20% 50%, #cdd8c0 50% 70%, #fff 70%);
}

.edge-bottom {
    height: 277px;
}

.edge-foot {
    height: 18px;
    background-color: #d6e2ec;
}
```
